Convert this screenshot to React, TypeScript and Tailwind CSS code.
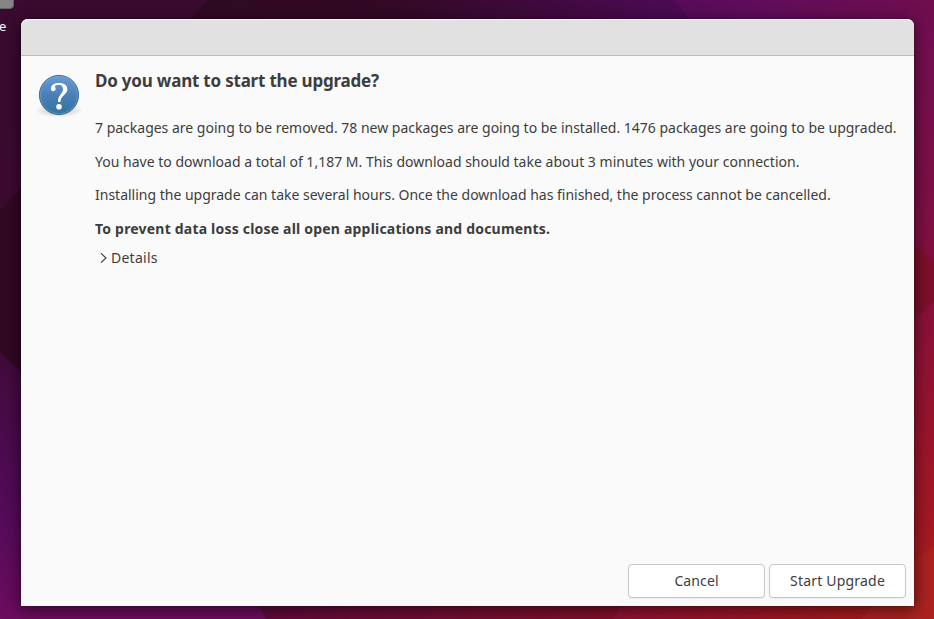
import React from "react";

function Wallpaper() {
  return (
    <svg className="absolute inset-0" width="934" height="619" viewBox="0 0 934 619" aria-hidden="true">
      <defs>
        <linearGradient id="left" x1="0" y1="0" x2="0" y2="1">
          <stop offset="0" stopColor="#3b0a30" />
          <stop offset="0.56" stopColor="#3d0a32" />
          <stop offset="0.6" stopColor="#440a40" />
          <stop offset="0.83" stopColor="#540b5a" />
          <stop offset="1" stopColor="#6d0c60" />
        </linearGradient>
        <linearGradient id="top" x1="190" y1="0" x2="700" y2="0" gradientUnits="userSpaceOnUse">
          <stop offset="0" stopColor="#300a22" />
          <stop offset="0.4" stopColor="#330926" />
          <stop offset="1" stopColor="#4e0b58" />
        </linearGradient>
        <linearGradient id="topRight" x1="670" y1="0" x2="934" y2="0" gradientUnits="userSpaceOnUse">
          <stop offset="0" stopColor="#560b58" />
          <stop offset="0.3" stopColor="#600c5c" />
          <stop offset="1" stopColor="#700e4e" />
        </linearGradient>
        <linearGradient id="right" x1="0" y1="0" x2="0" y2="619" gradientUnits="userSpaceOnUse">
          <stop offset="0" stopColor="#700e54" />
          <stop offset="0.4" stopColor="#801040" />
          <stop offset="0.7" stopColor="#9a142c" />
          <stop offset="0.88" stopColor="#a61a20" />
          <stop offset="1" stopColor="#a61a20" />
        </linearGradient>
        <linearGradient id="bottom" x1="256" y1="0" x2="622" y2="0" gradientUnits="userSpaceOnUse">
          <stop offset="0" stopColor="#600a3c" />
          <stop offset="1" stopColor="#84102a" />
        </linearGradient>
        <linearGradient id="bottomRight" x1="615" y1="0" x2="870" y2="0" gradientUnits="userSpaceOnUse">
          <stop offset="0" stopColor="#8f1033" />
          <stop offset="1" stopColor="#a81a1c" />
        </linearGradient>
      </defs>
      <rect width="934" height="619" fill="url(#left)" />
      <path d="M208 0H673L700 30H181Z" fill="url(#top)" />
      <path d="M673 0H934V60H727Z" fill="url(#topRight)" />
      <path d="M900 20H934V619H900Z" fill="url(#right)" />
      <path d="M0 210L30 178V381L0 352Z" fill="#320923" />
      <path d="M900 234L934 260V302L900 332Z" fill="#7c102c" />
      <path d="M248 590H626L613 619H266Z" fill="url(#bottom)" />
      <path d="M628 590H915V619H613Z" fill="url(#bottomRight)" />
      <path d="M934 545L900 573L862 619H934Z" fill="#ab2220" />
    </svg>
  );
}

function QuestionIcon() {
  return (
    <svg width="48" height="48" viewBox="0 0 48 48" className="shrink-0" aria-hidden="true">
      <defs>
        <linearGradient id="disc" x1="0" y1="0" x2="0" y2="1">
          <stop offset="0" stopColor="#6b9bd2" />
          <stop offset="0.5" stopColor="#4a80b8" />
          <stop offset="1" stopColor="#2e739f" />
        </linearGradient>
        <radialGradient id="ground">
          <stop offset="0" stopColor="#000" stopOpacity="0.25" />
          <stop offset="1" stopColor="#000" stopOpacity="0" />
        </radialGradient>
      </defs>
      <ellipse cx="24" cy="39.5" rx="24" ry="7" fill="url(#ground)" />
      <circle cx="24" cy="24" r="19.6" fill="url(#disc)" stroke="#2a638f" strokeWidth="0.9" />
      <circle cx="24" cy="24" r="18.6" fill="none" stroke="#8bb5dc" strokeOpacity="0.45" strokeWidth="0.9" />
      <path
        d="M15.9 17.4C16.3 13.8 19.5 12 24.2 12C29.3 12 32.4 14.6 32.4 18.3C32.4 23.5 25.9 24.2 25.4 31H23C22.4 24.8 28 22.8 28 18.3C28 15.3 26.5 13.7 23.8 13.7C21.6 13.7 20.1 14.4 20 15.6C20 16.4 20.8 16.9 20.6 18.3C20.4 19.5 19.4 20.2 18.2 20.2C16.7 20.2 15.7 19.1 15.9 17.4Z"
        fill="#fff"
      />
      <circle cx="24" cy="35.8" r="2.8" fill="#fff" />
    </svg>
  );
}

function DialogButton({ children, spacing }: { children: React.ReactNode; spacing: string }) {
  return (
    <button className={`h-[34px] w-[137px] rounded-[4px] border border-[#c6c6c6] bg-white pb-px text-[14px] shadow-[0_1px_1px_rgba(0,0,0,0.06)] ${spacing}`}>
      {children}
    </button>
  );
}

export default function App() {
  return (
    <div className="relative h-[619px] w-[934px] overflow-hidden bg-[#3b0a30] pl-[21px] pt-[19px] font-['Noto_Sans',sans-serif] text-[14px] text-[#3d3d3d]">
      <Wallpaper />
      <div className="absolute -left-4 -top-4 h-[25px] w-[30px] rounded-[4px] border border-[#656565] bg-[#858585]" />
      <span className="absolute left-0 top-[17px] -ml-px text-[13px] leading-[19px] text-white">e</span>
      <main className="relative flex h-[587px] w-[893px] flex-col rounded-t-[7px] bg-[#fafafa] shadow-[0_0_1px_rgba(0,0,0,0.8),0_3px_16px_1px_rgba(0,0,0,0.55)]">
        <header className="h-[37px] shrink-0 rounded-t-[7px] border-b border-[#bdbdbd] bg-[#e1e1e1] shadow-[inset_0_1px_0_#f8f8f8]" />
        <section className="flex grow pl-[14px] pt-[15px]">
          <QuestionIcon />
          <div className="ml-3 flex flex-col items-start whitespace-nowrap">
            <h1 className="mt-[-2px] h-6 text-[17px] font-bold leading-6 tracking-[-0.21px]">Do you want to start the upgrade?</h1>
            <p className="mt-[25px] leading-5 tracking-[-0.005px]">7 packages are going to be removed. 78 new packages are going to be installed. 1476 packages are going to be upgraded.</p>
            <p className="mt-[14px] leading-5 tracking-[0.01px]">You have to download a total of 1,187 M. This download should take about 3 minutes with your connection.</p>
            <p className="mt-[13px] leading-5 tracking-[-0.005px]">Installing the upgrade can take several hours. Once the download has finished, the process cannot be cancelled.</p>
            <p className="mt-[14px] font-bold leading-5 tracking-[0.2px]">To prevent data loss close all open applications and documents.</p>
            <div className="mt-[9px] flex items-center pl-[5px] leading-5">
              <svg width="7" height="10" viewBox="0 0 7 10" fill="none" stroke="#3d3d3d" strokeWidth="1.1" className="-mt-px mr-1"><path d="M1 .3L6 5L1 9.7" /></svg>
              <span className="tracking-[0.25px]">Details</span>
            </div>
          </div>
        </section>
        <footer className="flex justify-end gap-1 pb-2 pr-2">
          <DialogButton spacing="tracking-[0.1px]">Cancel</DialogButton>
          <DialogButton spacing="tracking-[0.2px]">Start Upgrade</DialogButton>
        </footer>
      </main>
    </div>
  );
}
